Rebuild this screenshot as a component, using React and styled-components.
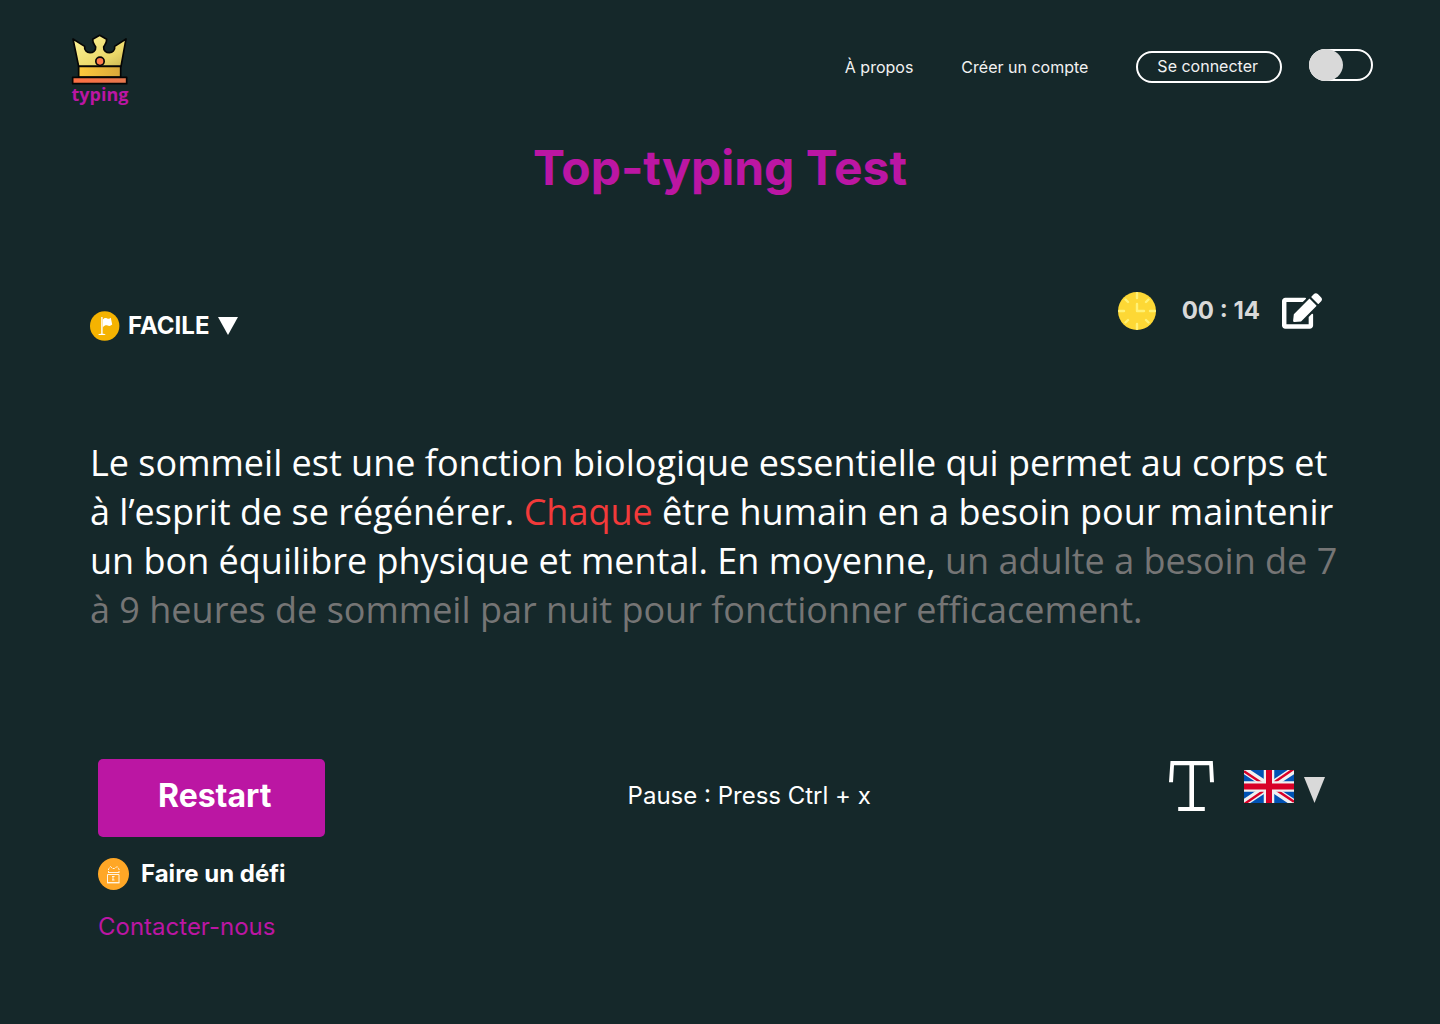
import React, { useState } from "react";
import styled, { createGlobalStyle } from "styled-components";
import { FaEdit } from "react-icons/fa";

const GlobalStyle = createGlobalStyle`
  *, *::before, *::after { box-sizing: border-box; }
  body {
    margin: 0;
    background: #15282a;
    color: #ffffff;
    font-family: Inter, "Liberation Sans", sans-serif;
  }
  button, select, input { font: inherit; color: inherit; }
  svg { display: block; flex: none; }
`;

const Page = styled.div`
  min-height: 100vh;
  display: flex;
  flex-direction: column;
`;

const Header = styled.header`
  display: flex;
  justify-content: space-between;
  align-items: flex-start;
  padding: 34px 67px 0 71px;
`;

const Logo = styled.a`
  display: flex;
  flex-direction: column;
  align-items: center;
  color: #bb16a3;
  font: 700 18px/16px "Open Sans", sans-serif;
  text-decoration: none;
`;

const Nav = styled.nav`
  display: flex;
  align-items: flex-start;
  gap: 27px;
  padding-top: 15px;
`;

const Links = styled.div`
  display: flex;
  align-items: center;
  gap: 48px;
  padding-top: 2px;
`;

const NavLink = styled.a`
  color: #f2f2f2;
  font-size: 16px;
  line-height: 32px;
  text-decoration: none;
`;

const LoginButton = styled.button`
  height: 32px;
  padding: 0 22px 2px 19px;
  border: 2px solid #ffffff;
  border-radius: 16px;
  background: transparent;
  color: #f2f2f2;
  font-size: 16px;
  line-height: 26px;
  cursor: pointer;
`;

const Toggle = styled.input`
  appearance: none;
  display: flex;
  width: 64px;
  height: 32px;
  margin: 0;
  border: 2px solid #ffffff;
  border-radius: 16px;
  cursor: pointer;

  &::before {
    content: "";
    flex: none;
    width: 34px;
    height: 32px;
    margin: -2px;
    border-radius: 50%;
    background: #d9d9d9;
  }
  &:checked { justify-content: flex-end; }
`;

const Title = styled.h1`
  margin: 37px 0 0;
  color: #bb16a3;
  font-size: 48px;
  font-weight: 700;
  line-height: 58px;
  text-align: center;
`;

const Toolbar = styled.div`
  display: flex;
  justify-content: space-between;
  align-items: flex-start;
  padding: 94px 118px 0 90px;
`;

const Level = styled.label`
  display: flex;
  align-items: center;
  gap: 8px;
  padding-top: 20px;
`;

const LevelSelect = styled.select`
  appearance: none;
  height: 30px;
  padding: 0;
  border: 0;
  background: transparent;
  font-size: 24px;
  font-weight: 700;
  line-height: 30px;
  cursor: pointer;

  option { color: #15282a; }
`;

const Timer = styled.div`
  display: flex;
  align-items: center;
  gap: 22px;
`;

const Time = styled.time`
  padding-left: 4px;
  color: #d9d9d9;
  font-size: 24px;
  font-weight: 700;
  line-height: 38px;
`;

const IconButton = styled.button`
  display: flex;
  align-items: flex-end;
  gap: 10px;
  padding: 0;
  border: 0;
  background: transparent;
  cursor: pointer;
`;

const Passage = styled.p`
  margin: 97px 0 0;
  padding: 0 90px;
  font: 400 36px/49px "Open Sans", sans-serif;
`;

const Mistake = styled.span`
  color: #f23a3a;
`;

const Pending = styled.span`
  color: #757575;
`;

const Footer = styled.footer`
  padding: 125px 115px 80px 98px;
`;

const Actions = styled.div`
  display: flex;
  justify-content: space-between;
  align-items: flex-start;
`;

const Restart = styled.button`
  height: 78px;
  padding: 0 54px 4px 60px;
  border: 0;
  border-radius: 5px;
  background: #bb16a3;
  font-size: 32px;
  font-weight: 700;
  line-height: 40px;
  cursor: pointer;
`;

const Hint = styled.p`
  margin: 0;
  padding: 22px 0 0 4px;
  font-size: 24px;
  line-height: 30px;
`;

const Settings = styled.div`
  display: flex;
  align-items: center;
  gap: 30px;
  padding-top: 2px;
`;

const FooterLink = styled.a`
  display: flex;
  align-items: center;
  gap: 12px;
  width: max-content;
  margin-top: 21px;
  color: ${(p) => (p.$accent ? "#bb16a3" : "#ffffff")};
  font-size: 24px;
  font-weight: ${(p) => (p.$accent ? 400 : 700)};
  line-height: 32px;
  text-decoration: none;
`;

const Crown = () => (
  <svg width="58" height="52" viewBox="33 30 174 156" aria-hidden="true">
    <defs>
      <linearGradient id="crown" x1="0" y1="0" x2="1" y2="1">
        <stop offset="0" stopColor="#fff59a" />
        <stop offset="0.7" stopColor="#ead768" />
        <stop offset="1" stopColor="#c9b552" />
      </linearGradient>
      <linearGradient id="band">
        <stop offset="0" stopColor="#ffc93c" />
        <stop offset="1" stopColor="#d9a83a" />
      </linearGradient>
      <linearGradient id="base">
        <stop offset="0" stopColor="#ff7043" />
        <stop offset="1" stopColor="#e5784e" />
      </linearGradient>
    </defs>
    <g stroke="#050505" strokeWidth="5" strokeLinejoin="round">
      <path d="M39 45 L74 67 C70 92 109 92 107 69 C106 63 98 62 98 46 L119 34 L140 46 C140 62 132 63 131 69 C129 92 168 92 164 67 L198 45 L183 127 H56 Z" fill="url(#crown)" />
      <rect x="56" y="127" width="126" height="32" fill="url(#band)" />
      <rect x="38" y="160" width="162" height="19" fill="url(#base)" />
      <circle cx="120" cy="112" r="12.5" fill="#ff7a4d" />
    </g>
  </svg>
);

const FlagBadge = () => (
  <svg width="30" height="30" viewBox="0 0 30 30" aria-hidden="true">
    <circle cx="14.7" cy="15" r="14.7" fill="#f5b301" />
    <path d="M11.2 6h1.4v17h-1.4z" fill="#fff" />
    <path d="M12.800 8.600c1.200-1.800 2.600-2 4.400-1.200 1.400.6 2.600.4 3.600-.600l1.400 6.800c-1.400 1.400-3 1.600-4.600 1-1.600-.6-3-.2-4.800 1.800z" fill="#fff" />
    <path d="M8.200 24c0-1.600 7.400-1.600 7.400 0z" fill="#fff" />
  </svg>
);

const Clock = () => (
  <svg width="38" height="38" viewBox="0 0 38 38" aria-hidden="true">
    <circle cx="19" cy="19" r="19" fill="#fdd835" />
    <g stroke="#fff176" strokeWidth="2.4" strokeLinecap="round" strokeLinejoin="round" fill="none">
      <path d="M19 1v5M19 32v5M1 19h5M32 19h5M7.500 7.500l2.500 2.500M30.500 7.500l-2.500 2.500M7.500 30.500l2.500-2.500M30.500 30.500l-2.500-2.500" />
      <path d="M19 12v7h7" />
    </g>
  </svg>
);

const Triangle = ({ width, height, color }) => (
  <svg width={width} height={height} viewBox="0 0 20 20" preserveAspectRatio="none" aria-hidden="true">
    <path d="M0 0h20L10 20z" fill={color} />
  </svg>
);

const LockBadge = () => (
  <svg width="31" height="32" viewBox="0 0 31 32" aria-hidden="true">
    <ellipse cx="15.5" cy="16" rx="15.5" ry="16" fill="#ffa726" />
    <g fill="none" stroke="#fff3e0" strokeWidth="1">
      <path d="M10.500 15v-4l2-2.500M21 15v-4l-2-2.500M12.500 8.500l2 2h2.500l2-2" strokeDasharray="2 1" />
      <path d="M11 14.500h10M9.500 24.500v-8h11.500v8z" />
      <path d="M14 18.500h2.500M15 18.500v3.500M14 22h2.500" />
    </g>
    <path d="M9 24h12.500v1.400H9z" fill="#fff3e0" />
  </svg>
);

const TypeIcon = () => (
  <svg width="45" height="50" viewBox="0 0 45 50" aria-hidden="true">
    <path d="M1.500 0h42.300L45 21.300h-4L40.200 4.300H25v41.600h10.800V50H9.200v-4.100h11.200V4.300H5L4 21.300H0z" fill="#fff" />
  </svg>
);

const UnionJack = () => (
  <svg width="50" height="33" viewBox="0 0 50 33" aria-hidden="true">
    <path d="M0 0h50v33H0z" fill="#0052b4" />
    <path d="M0 0l50 33M50 0L0 33" stroke="#f0f0f0" strokeWidth="7" />
    <path d="M0 1.200L23 16.500M27 16.500L50 31.800M50 -1.200L27 14.500M23 18.500L0 34.200" stroke="#d80027" strokeWidth="2.4" />
    <path d="M25 0v33M0 16.500h50" stroke="#f0f0f0" strokeWidth="10.5" />
    <path d="M25 0v33M0 16.500h50" stroke="#d80027" strokeWidth="6" />
  </svg>
);

export default function App() {
  const [light, setLight] = useState(false);

  return (
    <Page>
      <GlobalStyle />
      <Header>
        <Logo href="#">
          <Crown />
          typing
        </Logo>
        <Nav>
          <Links>
            <NavLink href="#a-propos">À propos</NavLink>
            <NavLink href="#inscription">Créer un compte</NavLink>
            <LoginButton type="button">Se connecter</LoginButton>
          </Links>
          <Toggle
            type="checkbox"
            role="switch"
            aria-label="Thème clair"
            checked={light}
            onChange={(e) => setLight(e.target.checked)}
          />
        </Nav>
      </Header>

      <main>
        <Title>Top-typing Test</Title>
        <Toolbar>
          <Level>
            <FlagBadge />
            <LevelSelect aria-label="Niveau" defaultValue="facile">
              <option value="facile">FACILE</option>
            </LevelSelect>
            <Triangle width={20} height={18} color="#ffffff" />
          </Level>
          <Timer>
            <Clock />
            <Time>00 : 14</Time>
            <IconButton type="button" aria-label="Modifier">
              <FaEdit size={40} />
            </IconButton>
          </Timer>
        </Toolbar>
        <Passage>
          Le sommeil est une fonction biologique essentielle qui permet au corps et à l’esprit de se
          régénérer. <Mistake>Chaque</Mistake> être humain en a besoin pour maintenir un bon
          équilibre physique et mental. En moyenne,{" "}
          <Pending>
            un adulte a besoin de 7 à 9 heures de sommeil par nuit pour fonctionner efficacement.
          </Pending>
        </Passage>
      </main>

      <Footer>
        <Actions>
          <Restart type="button">Restart</Restart>
          <Hint>Pause : Press Ctrl + x</Hint>
          <Settings>
            <IconButton type="button" aria-label="Police">
              <TypeIcon />
            </IconButton>
            <IconButton type="button" aria-label="Langue" aria-haspopup="listbox">
              <UnionJack />
              <Triangle width={21} height={26} color="#d9d9d9" />
            </IconButton>
          </Settings>
        </Actions>
        <FooterLink href="#defi">
          <LockBadge />
          Faire un défi
        </FooterLink>
        <FooterLink href="#contact" $accent>
          Contacter-nous
        </FooterLink>
      </Footer>
    </Page>
  );
}
